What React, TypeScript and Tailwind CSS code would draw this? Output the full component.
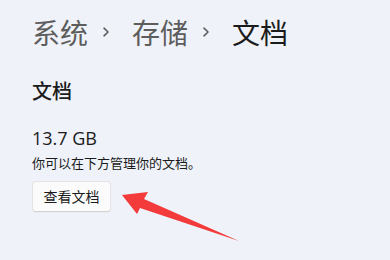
import React from 'react';

const cjk = { fontFamily: '"Segoe UI", "Noto Sans CJK SC", "Noto Sans", sans-serif' };

function Chevron() {
  return (
    <svg className="ml-[14px] mr-[22px]" width="8" height="10" viewBox="0 0 8 10">
      <path d="M2 1.2 L6 5 L2 8.8" fill="none" stroke="#5d5d5d" strokeWidth="1.6" strokeLinecap="round" strokeLinejoin="round" />
    </svg>
  );
}

export default function App() {
  return (
    <div
      className="relative w-[390px] h-[260px] overflow-hidden bg-[#eff2f8] text-[#1b1b1b]"
      style={cjk}
    >
      <div className="pl-8 pt-[13px]">
        {/* breadcrumb */}
        <div className="flex items-center text-[28px] leading-[38px] text-[#5d5d5d]">
          <span>系统</span>
          <Chevron />
          <span>存储</span>
          <Chevron />
          <span className="text-[#1b1b1b]">文档</span>
        </div>

        <div className="mt-[27px] text-[20px] leading-[26px] font-medium">文档</div>

        <div className="mt-[22px] text-[18px] leading-[24px]" style={{ fontFamily: '"Open Sans", "Noto Sans", sans-serif' }}>
          13.7 GB
        </div>
        <div className="mt-[4px] text-[13px] leading-[18px]">你可以在下方管理你的文档。</div>

        <button className="mt-[9px] h-[31px] w-[79px] rounded-[4px] border border-[#e3e3e3] border-b-[#d2d2d2] bg-[#fbfbfb] text-[14px] text-[#1b1b1b] shadow-[0_1px_1px_rgba(0,0,0,0.03)]">
          查看文档
        </button>
      </div>

      {/* annotation arrow */}
      <svg className="absolute left-0 top-0" width="390" height="260" viewBox="0 0 390 260">
        <polygon
          points="122,195 148,192 144,199 239,241 140,208 137,214"
          fill="#f23b3a"
        />
      </svg>
    </div>
  );
}
